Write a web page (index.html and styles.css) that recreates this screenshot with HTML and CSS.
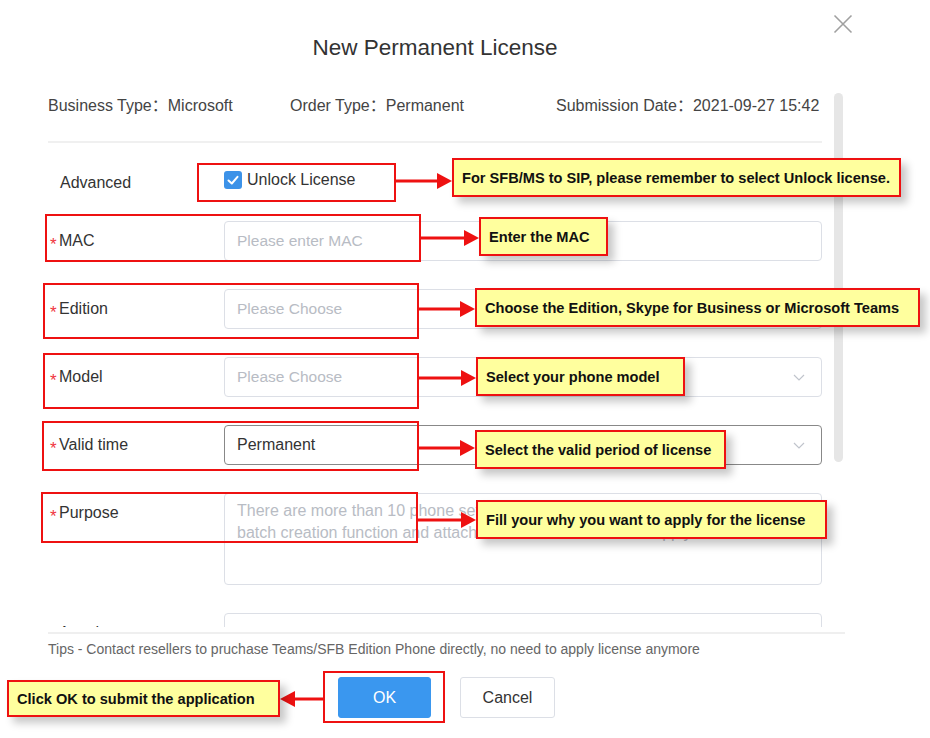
FILE: index.html
```html
<!DOCTYPE html>
<html lang="en">
<head>
<meta charset="utf-8">
<title>New Permanent License</title>
<link rel="stylesheet" href="styles.css">
</head>
<body>
<div class="page">
  <div class="dialog">
    <h1 class="title">New Permanent License</h1>
    <div class="body">
      <div class="content">
        <div class="info">
          <span class="info-item w1">Business Type：Microsoft</span>
          <span class="info-item w2">Order Type：Permanent</span>
          <span class="info-item">Submission Date：2021-09-27 15:42</span>
        </div>
        <div class="divider"></div>
        <div class="form">
          <div class="row adv">
            <div class="label plain">Advanced</div>
            <label class="check">
              <span class="box"><svg width="18" height="18" viewBox="0 0 18 18"><polyline points="4.5,9.5 7.8,12.5 13.5,5.8" fill="none" stroke="#fff" stroke-width="2" stroke-linecap="round" stroke-linejoin="round"/></svg></span>
              <span>Unlock License</span>
            </label>
          </div>
          <div class="row">
            <div class="label"><span class="req">*</span>MAC</div>
            <div class="input ph">Please enter MAC</div>
          </div>
          <div class="row">
            <div class="label"><span class="req">*</span>Edition</div>
            <div class="input ph select">Please Choose<svg class="chev" width="12" height="7" viewBox="0 0 12 7"><polyline points="1,1 6,6 11,1" fill="none" stroke="#c0c4cc" stroke-width="1.2"/></svg></div>
          </div>
          <div class="row">
            <div class="label"><span class="req">*</span>Model</div>
            <div class="input ph select">Please Choose<svg class="chev" width="12" height="7" viewBox="0 0 12 7"><polyline points="1,1 6,6 11,1" fill="none" stroke="#c0c4cc" stroke-width="1.2"/></svg></div>
          </div>
          <div class="row">
            <div class="label"><span class="req">*</span>Valid time</div>
            <div class="input select dark">Permanent<svg class="chev" width="12" height="7" viewBox="0 0 12 7"><polyline points="1,1 6,6 11,1" fill="none" stroke="#c0c4cc" stroke-width="1.2"/></svg></div>
          </div>
          <div class="row">
            <div class="label"><span class="req">*</span>Purpose</div>
            <div class="input textarea ph">There are more than 10 phone sets to apply for licenses, please use the<br>batch creation function and attach the list of the devices to apply</div>
          </div>
          <div class="row">
            <div class="label"><span class="req">*</span>Attachment</div>
            <div class="input ph">Upload the related attachment file</div>
          </div>
        </div>
      </div>
      <div class="scrollbar"></div>
    </div>
    <div class="footer">
      <div class="tips">Tips - Contact resellers to pruchase Teams/SFB Edition Phone directly, no need to apply license anymore</div>
      <div class="buttons">
        <button class="btn primary">OK</button>
        <button class="btn">Cancel</button>
      </div>
    </div>
  </div>

  <button class="close" aria-label="Close"><svg width="20" height="20" viewBox="0 0 20 20"><path d="M1.5 1.5 L18.5 18.5 M18.5 1.5 L1.5 18.5" stroke="#a0a0a0" stroke-width="1.6" fill="none"/></svg></button>

  <svg class="annot" width="930" height="738" viewBox="0 0 930 738">
    <g fill="none" stroke="#ee1111" stroke-width="2">
      <rect x="198" y="164" width="197" height="37"/>
      <rect x="46" y="215" width="374" height="46"/>
      <rect x="44" y="284" width="374" height="54"/>
      <rect x="44" y="354" width="374" height="54"/>
      <rect x="43" y="422" width="375" height="48"/>
      <rect x="42" y="493" width="375" height="49"/>
      <rect x="324" y="672" width="120" height="50"/>
    </g>
    <g stroke="#ee1111" stroke-width="3">
      <line x1="396" y1="181" x2="439" y2="181"/>
      <line x1="421" y1="238" x2="466" y2="238"/>
      <line x1="419" y1="309" x2="462" y2="309"/>
      <line x1="419" y1="378" x2="463" y2="378"/>
      <line x1="419" y1="448" x2="462" y2="448"/>
      <line x1="418" y1="520" x2="463" y2="520"/>
      <line x1="323" y1="699" x2="293" y2="699"/>
    </g>
    <g fill="#ee1111">
      <polygon points="437,173 452,181 437,189"/>
      <polygon points="464,230 479,238 464,246"/>
      <polygon points="460,301 475,309 460,317"/>
      <polygon points="461,370 476,378 461,386"/>
      <polygon points="460,440 475,448 460,456"/>
      <polygon points="461,512 476,520 461,528"/>
      <polygon points="295,691 280,699 295,707"/>
    </g>
  </svg>

  <div class="callout c1">For SFB/MS to SIP, please remember to select Unlock license.</div>
  <div class="callout c2">Enter the MAC</div>
  <div class="callout c3">Choose the Edition, Skype for Business or Microsoft Teams</div>
  <div class="callout c4">Select your phone model</div>
  <div class="callout c5">Select the valid period of license</div>
  <div class="callout c6">Fill your why you want to apply for the license</div>
  <div class="callout c7">Click OK to submit the application</div>
</div>
</body>
</html>
```

FILE: styles.css
```css
* { box-sizing: border-box; }
html, body { margin: 0; padding: 0; background: #fff; }
body {
  font-family: "Liberation Sans", "Noto Sans CJK SC", Arial, sans-serif;
  color: #333;
}
.page {
  position: relative;
  width: 930px;
  height: 738px;
  overflow: hidden;
  background: #fff;
}
.dialog {
  padding-left: 48px;
}
.title {
  width: 774px;
  margin: 0;
  padding-top: 33px;
  font-size: 22.5px;
  line-height: 30px;
  font-weight: normal;
  text-align: center;
  color: #333;
}
.body {
  display: flex;
  margin-top: 22px;
  height: 542px;
  overflow: hidden;
}
.content {
  width: 774px;
  flex: none;
}
.scrollbar {
  flex: none;
  width: 9px;
  height: 369px;
  margin-top: 8px;
  margin-left: 12px;
  background: #e6e6e6;
  border-radius: 5px;
}
.info {
  display: flex;
  height: 40px;
  line-height: 41px;
  font-size: 16px;
  color: #444;
  white-space: nowrap;
}
.info-item.w1 { width: 242px; }
.info-item.w2 { width: 266px; }
.divider {
  margin-top: 16px;
  height: 2px;
  background: #f0f0f0;
}
.form {
  display: flex;
  flex-direction: column;
  gap: 28px;
  margin-top: 18px;
}
.row {
  display: flex;
  align-items: flex-start;
}
.row.adv {
  height: 40px;
  align-items: center;
  margin-bottom: -8px;
}
.label {
  width: 176px;
  height: 40px;
  flex: none;
  display: flex;
  align-items: center;
  padding-left: 2px;
  font-size: 16px;
  color: #333;
  white-space: nowrap;
}
.label.plain { padding-left: 12px; padding-top: 3px; }
.req {
  width: 9px;
  color: #f0353f;
  font-size: 17px;
  line-height: 1;
  transform: translateY(3px);
}
.check {
  display: flex;
  align-items: center;
  gap: 5px;
  font-size: 16px;
  color: #333;
  margin-top: -2px;
}
.box {
  width: 18px;
  height: 18px;
  border-radius: 3px;
  background: #3c92e8;
  display: flex;
}
.input {
  flex: 1;
  height: 40px;
  border: 1px solid #dcdfe6;
  border-radius: 4px;
  padding: 0 12px;
  font-size: 16px;
  line-height: 38px;
  color: #333;
  white-space: nowrap;
  overflow: hidden;
}
.input.ph { color: #b8bcc4; font-size: 15.5px; }
.input.dark { border-color: #888; }
.input.select { display: flex; align-items: center; justify-content: space-between; padding-right: 16px; }
.chev { flex: none; }
.input.textarea {
  height: 92px;
  line-height: 22px;
  padding-top: 6px;
  font-size: 16px;
}
.footer {
  width: 797px;
}
.footer::before {
  content: "";
  display: block;
  height: 2px;
  margin-top: 5px;
  background: #efefef;
}
.tips {
  margin-top: 5px;
  font-size: 14px;
  line-height: 20px;
  color: #666;
  white-space: nowrap;
}
.buttons {
  display: flex;
  gap: 29px;
  margin-top: 18px;
  padding-left: 290px;
}
.btn {
  height: 41px;
  width: 95px;
  border: 1px solid #dcdfe6;
  border-radius: 3px;
  background: #fff;
  font-family: inherit;
  font-size: 16px;
  color: #333;
  padding: 0;
}
.btn.primary {
  width: 93px;
  background: #3a97ef;
  border-color: #3a97ef;
  color: #fff;
}
.close {
  position: absolute;
  left: 833px;
  top: 14px;
  width: 20px;
  height: 20px;
  padding: 0;
  border: 0;
  background: none;
}
.close svg { display: block; }
.annot {
  position: absolute;
  left: 0;
  top: 0;
  pointer-events: none;
}
.callout {
  position: absolute;
  height: 39px;
  padding-left: 8px;
  border: 2px solid #ee1111;
  background: #ffff9e;
  font-weight: bold;
  font-size: 14.6px;
  line-height: 36px;
  color: #111;
  white-space: nowrap;
  box-shadow: 6px 6px 8px rgba(0, 0, 0, 0.22);
}
.c1 { left: 452px; top: 158px; width: 449px; }
.c2 { left: 479px; top: 217px; width: 129px; }
.c3 { left: 475px; top: 288px; width: 445px; }
.c4 { left: 476px; top: 357px; width: 209px; }
.c5 { left: 475px; top: 430px; width: 251px; }
.c6 { left: 476px; top: 500px; width: 351px; }
.c7 { left: 7px; top: 680px; width: 273px; height: 37px; line-height: 34px; }
```
